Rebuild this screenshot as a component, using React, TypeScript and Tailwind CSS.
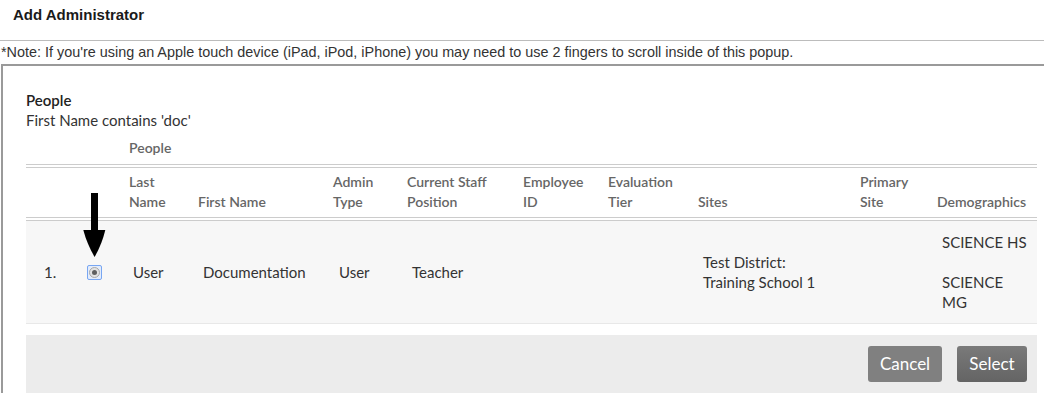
import React from "react";

const cols = "grid grid-cols-[44px_59px_69px_135px_74px_116px_85px_90px_162px_77px_100px]";

function Radio() {
  return (
    <div className="w-[15px] h-[15px] rounded-[2px] border border-[#78a6f2] bg-[#e3ecfb] flex items-center justify-center">
      <div className="w-[11px] h-[11px] rounded-full border border-[#a9a9a9] bg-[#e2e2e2] flex items-center justify-center">
        <div className="w-[5px] h-[5px] rounded-full bg-[#5f5f5f]" />
      </div>
    </div>
  );
}

function Arrow() {
  return (
    <svg
      className="absolute left-[80px] top-[190px]"
      width="30"
      height="70"
      viewBox="0 0 30 70"
    >
      <rect x="11" y="3" width="7" height="38" fill="#000" />
      <path d="M3.3 40 L25.3 40 Q22 54 14.6 67 Q7 54 3.3 40 Z" fill="#000" />
    </svg>
  );
}

export default function App() {
  const head = "text-[#666] font-semibold";
  return (
    <div className="relative w-[1044px] h-[397px] overflow-hidden bg-white">
      <div className="h-[41px] border-b border-[#bcbcbc] pl-[13px] pt-[6px] font-['Liberation_Sans',Arial,sans-serif] text-[15px] leading-[18px] font-bold text-[#1a1a1a]">
        Add Administrator
      </div>
      <div className="h-[23px] pl-[1px] pt-[3px] font-['Liberation_Sans',Arial,sans-serif] text-[14.4px] leading-[17px] text-[#333]">
        *Note: If you're using an Apple touch device (iPad, iPod, iPhone) you may need to use 2 fingers to scroll inside of this popup.
      </div>
      <div className="ml-[1px] border-l-2 border-t-2 border-[#9a9a9a] pl-[23px] pr-[7px] pt-[24px] font-['Lato',sans-serif] text-[15px] leading-[20px] text-[#333]">
        <div className="font-semibold text-[#222]">People</div>
        <div className="leading-[21px]">First Name contains 'doc'</div>

        <div className={`${cols} mt-[7px] pb-[6px] border-b border-[#cccccc] text-[14px] ${head}`}>
          <div />
          <div />
          <div>People</div>
        </div>

        <div className={`${cols} mt-[2px] pt-[4px] pb-[5px] border-t border-b border-[#cccccc] text-[14px] items-end ${head}`}>
          <div />
          <div />
          <div>Last<br />Name</div>
          <div>First Name</div>
          <div>Admin<br />Type</div>
          <div>Current Staff<br />Position</div>
          <div>Employee<br />ID</div>
          <div>Evaluation<br />Tier</div>
          <div>Sites</div>
          <div>Primary<br />Site</div>
          <div>Demographics</div>
        </div>

        <div className={`${cols} mt-[2px] py-[11px] border-t border-b border-t-[#cccccc] border-b-[#e8e8e8] bg-[#f7f7f7] items-center`}>
          <div className="pl-[18px]">1.</div>
          <div className="pl-[17px]">
            <Radio />
          </div>
          <div className="pl-[4px]">User</div>
          <div className="pl-[5px]">Documentation</div>
          <div className="pl-[6px]">User</div>
          <div className="pl-[5px]">Teacher</div>
          <div />
          <div />
          <div className="pl-[5px]">Test District:<br />Training School 1</div>
          <div />
          <div className="pl-[5px]">SCIENCE HS<br /><br />SCIENCE<br />MG</div>
        </div>

        <div className="mt-[11px] h-[58px] bg-[#ececec] flex items-center justify-end gap-[15px] pr-[10px]">
          <button className="h-[36px] w-[74px] rounded-[3px] bg-[#808080] text-white text-[17px]">
            Cancel
          </button>
          <button className="h-[36px] w-[70px] rounded-[3px] bg-gradient-to-b from-[#7a7a7a] to-[#646464] text-white text-[17px]">
            Select
          </button>
        </div>
      </div>
      <Arrow />
    </div>
  );
}
